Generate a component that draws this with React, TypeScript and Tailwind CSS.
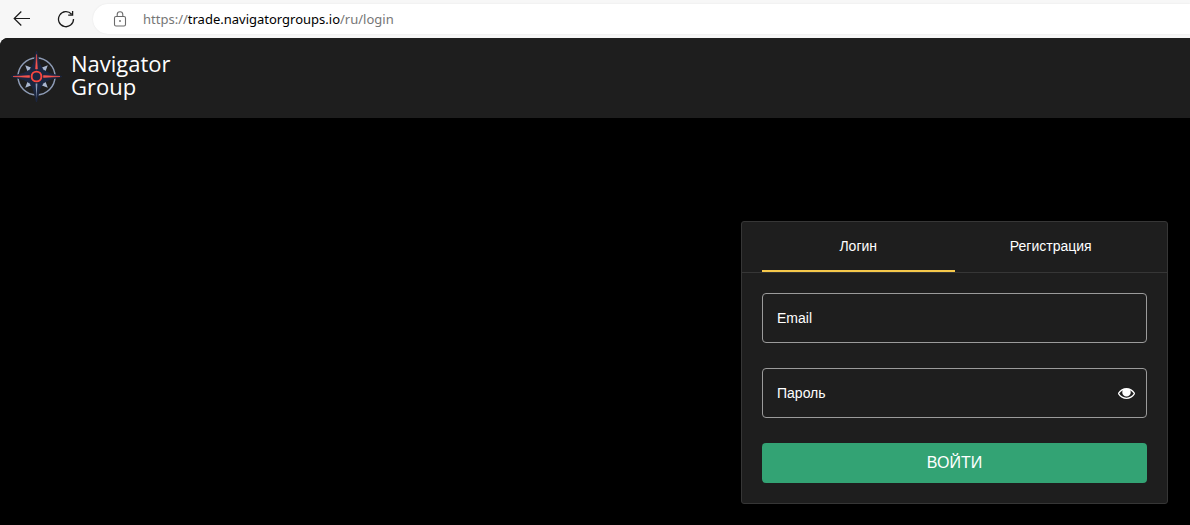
import { useState } from "react";
import type { ReactNode } from "react";

function CompassLogo() {
  return (
    <svg viewBox="0 -1 64 64" className="size-16 shrink-0" aria-hidden="true">
      <circle cx="31.5" cy="31.5" r="18.5" fill="none" stroke="#8d9bb5" strokeWidth="1.5" />
      <g fill="#a9b6ce">
        {[0, 90, 180, 270].map((angle) => (
          <path
            key={angle}
            transform={`rotate(${angle} 31.5 31.5)`}
            d="M20.2 20.2 L26 22.4 L25.4 25.4 L22.4 26 Z"
          />
        ))}
      </g>
      <path
        transform="translate(-0.5 -0.5)"
        d="M32 6.5 L35 19 L38.5 25.5 L45 29 L57.5 32 L45 35 L38.5 38.5 L35 45 L32 57.5 L29 45 L25.5 38.5 L19 35 L6.5 32 L19 29 L25.5 25.5 L29 19 Z"
        fill="#1b2640"
        stroke="#1b2640"
        strokeWidth="1"
        strokeLinejoin="round"
      />
      <path
        transform="translate(-0.5 -0.5)"
        d="M32 10 L32.9 24.5 L31.1 24.5 Z M8.5 32 L25 31.1 L25 32.9 Z M55.5 32 L39 31.1 L39 32.9 Z"
        fill="#f4524d"
        stroke="#f4524d"
        strokeWidth="0.6"
      />
      <path d="M31.5 53.5 L32.4 38.5 L30.6 38.5 Z" fill="#8d9bb5" />
      <circle cx="31.5" cy="31.5" r="4.9" fill="#1b2640" stroke="#fb473f" strokeWidth="1.9" />
    </svg>
  );
}

function BackIcon() {
  return (
    <svg viewBox="0 0 18 18" className="size-[18px]" fill="none" stroke="#1b1b1b" strokeWidth="1.2" aria-hidden="true">
      <path d="M17 8.5 H1.2 M8.3 1.5 L1.2 8.5 L8.3 15.5" />
    </svg>
  );
}

function ReloadIcon() {
  return (
    <svg viewBox="0 0 18 18" className="size-[18px]" fill="none" stroke="#1b1b1b" strokeWidth="1.3" aria-hidden="true">
      <path d="M16.5 9 A7.5 7.5 0 1 1 14.6 4.2 M15.6 1 V5.2 H11.2" />
    </svg>
  );
}

function LockIcon() {
  return (
    <svg viewBox="0 0 14 16" className="h-4 w-3.5 shrink-0" fill="none" stroke="#6b6b6b" strokeWidth="1.1" aria-hidden="true">
      <rect x="1.5" y="5.5" width="11" height="9.5" rx="1.5" />
      <path d="M4.2 5.5 V3.6 A2.8 2.8 0 0 1 9.8 3.6 V5.5" />
      <circle cx="7" cy="10" r="0.9" fill="#6b6b6b" stroke="none" />
    </svg>
  );
}

function EyeIcon() {
  return (
    <svg viewBox="0 0 1792 1152" className="h-[11px] w-[17px]" fill="currentColor" aria-hidden="true">
      <path
        transform="matrix(1 0 0 -1 0 1152)"
        d="M1664 576q-152 236 -381 353q61 -104 61 -225q0 -185 -131.5 -316.5t-316.5 -131.5t-316.5 131.5t-131.5 316.5q0 121 61 225q-229 -117 -381 -353q133 -205 333.5 -326.5t434.5 -121.5t434.5 121.5t333.5 326.5zM944 960q0 -20 -14 -34t-34 -14q-86 0 -147 -61t-61 -147q0 -20 -14 -34t-34 -14t-34 14t-14 34q0 125 89.5 214.5t214.5 89.5q20 0 34 -14t14 -34zM1792 576q0 -34 -20 -69q-140 -230 -376.5 -368.5t-499.5 -138.5t-499.5 139t-376.5 368q-20 35 -20 69t20 69q140 229 376.5 368t499.5 139t499.5 -139t376.5 -368q20 -35 20 -69z"
      />
    </svg>
  );
}

function Field({ id, label, type, children }: { id: string; label: string; type: string; children?: ReactNode }) {
  return (
    <div className="relative flex h-[50px] items-center rounded border border-[#9b9b9b] focus-within:border-[#f0c040]">
      <input
        id={id}
        type={type}
        placeholder=" "
        className="peer h-full min-w-0 flex-1 bg-transparent px-3.5 text-sm text-white outline-none"
      />
      <label
        htmlFor={id}
        className="pointer-events-none absolute inset-y-0 left-3.5 hidden items-center text-sm peer-placeholder-shown:flex"
      >
        {label}
      </label>
      {children}
    </div>
  );
}

function BrowserBar() {
  return (
    <div className="flex h-[38px] items-center bg-[#f7f7f7] pl-[13px]">
      <button type="button" aria-label="Назад">
        <BackIcon />
      </button>
      <button type="button" aria-label="Обновить" className="ml-[26px]">
        <ReloadIcon />
      </button>
      <div className="ml-[18px] flex h-[30px] flex-1 items-center rounded-l-full bg-white pl-5 shadow-[0_0_2px_rgba(0,0,0,0.08)]">
        <LockIcon />
        <div
          role="textbox"
          aria-label="Адресная строка"
          contentEditable
          suppressContentEditableWarning
          className="ml-4 flex-1 font-['Noto_Sans',sans-serif] text-[13px] leading-5 whitespace-nowrap text-[#767676] outline-none"
        >
          https://<span className="text-black">trade.navigatorgroups.io</span>/ru/login
        </div>
      </div>
    </div>
  );
}

export default function App() {
  const [tab, setTab] = useState("login");
  const [visible, setVisible] = useState(false);
  const tabs = [
    { key: "login", label: "Логин" },
    { key: "register", label: "Регистрация" },
  ];

  return (
    <div className="flex min-h-screen flex-col bg-[#f7f7f7] font-['Liberation_Sans',Arial,sans-serif] text-white">
      <BrowserBar />
      <div className="flex flex-1 flex-col overflow-hidden rounded-tl-lg bg-black">
        <header className="flex h-20 items-center bg-[#1e1e1e] pb-1 pl-[5px]">
          <a href="/ru" className="flex items-center gap-0.5 font-['Open_Sans','Noto_Sans',sans-serif] text-[22px] leading-[23px]">
            <CompassLogo />
            <span className="pb-0.5">
              Navigator
              <br />
              Group
            </span>
          </a>
        </header>
        <main className="flex flex-1 justify-end px-[22px] pt-[103px] pb-5">
          <section className="w-full max-w-[427px] self-start rounded-[3px] border border-[#363636] bg-[#1e1e1e]">
            <div role="tablist" className="flex border-b border-[#363636] px-5">
              {tabs.map((t) => (
                <button
                  key={t.key}
                  type="button"
                  role="tab"
                  aria-selected={tab === t.key}
                  onClick={() => setTab(t.key)}
                  className={
                    tab === t.key
                      ? "h-[50px] flex-1 border-b-2 border-[#f5c84b] text-sm"
                      : "h-[50px] flex-1 border-b-2 border-transparent text-sm"
                  }
                >
                  {t.label}
                </button>
              ))}
            </div>
            <form className="flex flex-col gap-[25px] p-5" onSubmit={(e) => e.preventDefault()}>
              <Field id="email" label="Email" type="email" />
              <Field id="password" label="Пароль" type={visible ? "text" : "password"}>
                <button type="button" aria-label="Показать пароль" onClick={() => setVisible(!visible)} className="px-[11px] py-2">
                  <EyeIcon />
                </button>
              </Field>
              <button type="submit" className="h-10 rounded bg-[#33a374] text-base uppercase">
                Войти
              </button>
            </form>
          </section>
        </main>
      </div>
    </div>
  );
}
